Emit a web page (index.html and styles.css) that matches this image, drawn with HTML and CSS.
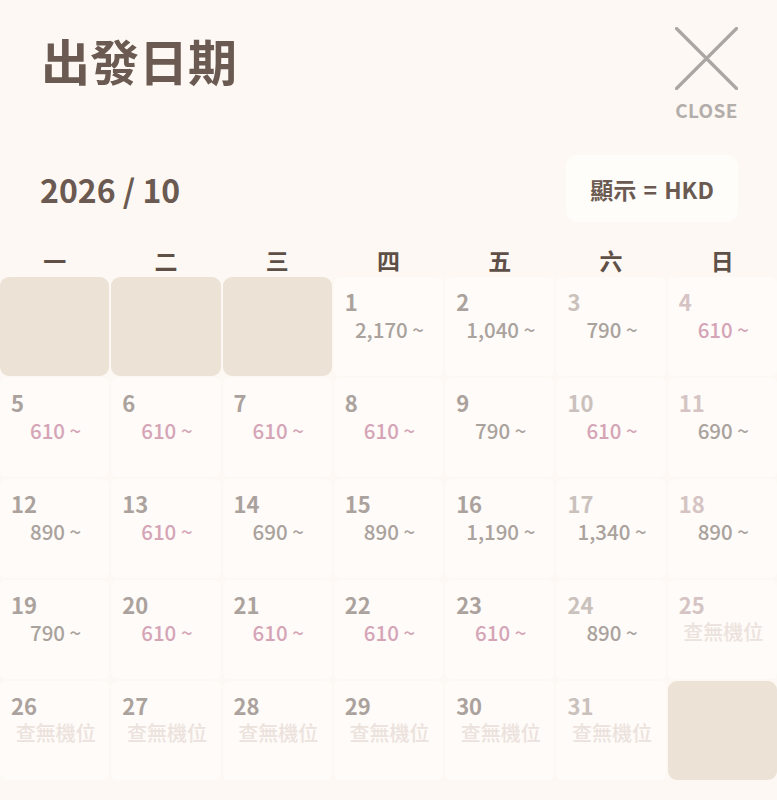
FILE: index.html
```html
<!DOCTYPE html>
<html lang="zh-Hant">
<head>
<meta charset="utf-8">
<title>出發日期</title>
<link rel="stylesheet" href="styles.css">
</head>
<body>
<div class="page">
  <header class="top">
    <h1 class="title">出發日期</h1>
    <div class="close">
      <svg class="close-x" width="63" height="63" viewBox="0 0 63 63"><path d="M1.5 1.5 L61.5 61.5 M61.5 1.5 L1.5 61.5" stroke="#aaa6a3" stroke-width="3.2" stroke-linecap="round" fill="none"/></svg>
      <span class="close-label">CLOSE</span>
    </div>
  </header>
  <div class="month-row">
    <div class="month">2026 / 10</div>
    <div class="currency">顯示 = HKD</div>
  </div>
  <div class="weekdays">
    <span>一</span><span>二</span><span>三</span><span>四</span><span>五</span><span>六</span><span>日</span>
  </div>
  <div class="grid">
    <div class="cell empty"></div>
    <div class="cell empty"></div>
    <div class="cell empty"></div>
    <div class="cell"><span class="num">1</span><span class="price">2,170 ~</span></div>
    <div class="cell"><span class="num">2</span><span class="price">1,040 ~</span></div>
    <div class="cell sat"><span class="num">3</span><span class="price">790 ~</span></div>
    <div class="cell sun"><span class="num">4</span><span class="price low">610 ~</span></div>

    <div class="cell"><span class="num">5</span><span class="price low">610 ~</span></div>
    <div class="cell"><span class="num">6</span><span class="price low">610 ~</span></div>
    <div class="cell"><span class="num">7</span><span class="price low">610 ~</span></div>
    <div class="cell"><span class="num">8</span><span class="price low">610 ~</span></div>
    <div class="cell"><span class="num">9</span><span class="price">790 ~</span></div>
    <div class="cell sat"><span class="num">10</span><span class="price low">610 ~</span></div>
    <div class="cell sun"><span class="num">11</span><span class="price">690 ~</span></div>

    <div class="cell"><span class="num">12</span><span class="price">890 ~</span></div>
    <div class="cell"><span class="num">13</span><span class="price low">610 ~</span></div>
    <div class="cell"><span class="num">14</span><span class="price">690 ~</span></div>
    <div class="cell"><span class="num">15</span><span class="price">890 ~</span></div>
    <div class="cell"><span class="num">16</span><span class="price">1,190 ~</span></div>
    <div class="cell sat"><span class="num">17</span><span class="price">1,340 ~</span></div>
    <div class="cell sun"><span class="num">18</span><span class="price">890 ~</span></div>

    <div class="cell"><span class="num">19</span><span class="price">790 ~</span></div>
    <div class="cell"><span class="num">20</span><span class="price low">610 ~</span></div>
    <div class="cell"><span class="num">21</span><span class="price low">610 ~</span></div>
    <div class="cell"><span class="num">22</span><span class="price low">610 ~</span></div>
    <div class="cell"><span class="num">23</span><span class="price low">610 ~</span></div>
    <div class="cell sat"><span class="num">24</span><span class="price">890 ~</span></div>
    <div class="cell sun"><span class="num">25</span><span class="none">查無機位</span></div>

    <div class="cell"><span class="num">26</span><span class="none">查無機位</span></div>
    <div class="cell"><span class="num">27</span><span class="none">查無機位</span></div>
    <div class="cell"><span class="num">28</span><span class="none">查無機位</span></div>
    <div class="cell"><span class="num">29</span><span class="none">查無機位</span></div>
    <div class="cell"><span class="num">30</span><span class="none">查無機位</span></div>
    <div class="cell sat"><span class="num">31</span><span class="none">查無機位</span></div>
    <div class="cell empty"></div>
  </div>
</div>
</body>
</html>
```

FILE: styles.css
```css
* { box-sizing: border-box; }
html, body {
  margin: 0;
  padding: 0;
  background: #fdf8f3;
}
body {
  font-family: "Noto Sans CJK TC", "Noto Sans", sans-serif;
  color: #6a5a51;
}
.page {
  width: 777px;
  height: 800px;
  overflow: hidden;
}
.top {
  display: flex;
  justify-content: space-between;
  align-items: flex-start;
  padding: 27px 39px 0 41px;
  height: 130px;
}
.title {
  margin: 8px 0 0;
  font-size: 49px;
  line-height: 1;
  font-weight: 700;
  color: #6a5a51;
  letter-spacing: 0;
}
.close {
  display: flex;
  flex-direction: column;
  align-items: center;
  width: 63px;
}
.close-x { display: block; }
.close-label {
  margin-top: 10px;
  font-size: 19px;
  line-height: 1;
  font-weight: 700;
  color: #b3aeab;
  letter-spacing: 0.3px;
}
.month-row {
  display: flex;
  justify-content: space-between;
  align-items: center;
  padding: 0 39px 0 40px;
  margin-top: 25px;
  height: 67px;
}
.month {
  font-size: 32px;
  font-weight: 700;
  line-height: 1;
  color: #6a5a51;
}
.currency {
  width: 172px;
  height: 67px;
  border-radius: 12px;
  background: #fffdf9;
  display: flex;
  align-items: center;
  justify-content: center;
  font-size: 23px;
  font-weight: 700;
  color: #6a5a51;
  word-spacing: 2px;
}
.weekdays {
  display: grid;
  grid-template-columns: repeat(7, 1fr);
  column-gap: 2px;
  height: 55px;
  align-items: center;
  padding-top: 22px;
}
.weekdays span {
  text-align: center;
  font-size: 23px;
  font-weight: 700;
  line-height: 1;
  color: #5e4f47;
}
.grid {
  display: grid;
  grid-template-columns: repeat(7, 1fr);
  grid-auto-rows: 99px;
  gap: 2px;
}
.cell {
  background: #fefbf8;
  border-radius: 6px;
  display: flex;
  flex-direction: column;
  padding: 11px 0 0 11px;
}
.cell.empty {
  background: #ece2d6;
  border-radius: 9px;
}
.num {
  font-size: 22px;
  font-weight: 700;
  line-height: 26px;
  color: #aba29d;
}
.sat .num { color: #cac1bd; }
.sun .num { color: #d5c4c3; }
.price, .none {
  margin-top: 2px;
  padding-right: 9px;
  text-align: center;
  font-size: 20.5px;
  line-height: 26px;
  font-weight: 500;
  color: #aaa29d;
}
.price.low { color: #d5a5b7; }
.none {
  font-size: 20px;
  color: #ece2dd;
  font-weight: 500;
}
```
